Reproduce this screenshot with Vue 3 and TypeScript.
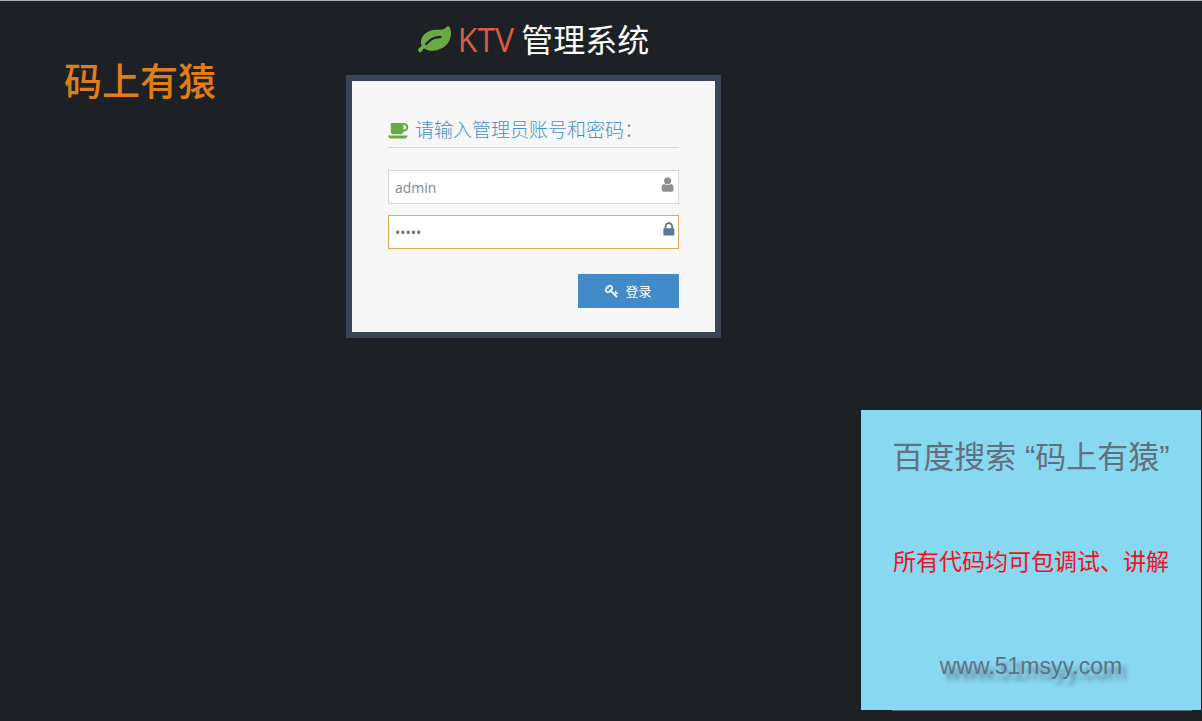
<script setup lang="ts">
import { ref } from 'vue'

const account = ref('admin')
const password = ref('admin')

function login(): void {
  account.value = account.value.trim()
}
</script>

<template>
  <div class="page">
    <div class="brand">码上有猿</div>

    <main class="login">
      <h1 class="title">
        <svg class="leaf" viewBox="0 0 1792 1792" aria-hidden="true">
          <path d="M1280 704q0-26-19-45t-45-19q-172 0-318 49.500t-259.500 134-235.500 219.500q-19 21-19 45 0 26 19 45t45 19q24 0 45-19 27-24 74-71t67-66q137-124 268.500-176t313.500-52q26 0 45-19t19-45zm512-198q0 95-20 193-46 224-184.500 383t-357.500 268q-214 108-438 108-148 0-286-47-15-5-88-42t-96-37q-16 0-39.500 32t-45 70-52.500 70-60 32q-43 0-63.500-17.500t-45.500-59.500q-2-4-6-11t-5.500-10-3-9.500-1.500-13.500q0-35 31-73.500t68-65.500 68-56 31-48q0-4-14-38t-16-44q-9-51-9-104 0-115 43.500-220t119-184.500 170.500-139 204-95.500q55-18 145-25.500t179.500-9 178.500-6 163.500-24 113.500-56.500l29.500-29.500 29.500-28 27-20 36.500-16 43.500-4.500q39 0 70.500 46t47.500 112 24 124 8 96z" />
        </svg>
        <span class="accent">KTV</span>
        <span>管理系统</span>
      </h1>

      <form class="card" @submit.prevent="login">
        <h2 class="prompt">
          <svg class="cup" viewBox="0 0 1920 1792" aria-hidden="true">
            <path d="M1664 640q0-80-56-136t-136-56h-64v384h64q80 0 136-56t56-136zm-1664 768h1792q0 106-75 181t-181 75h-1280q-106 0-181-75t-75-181zm1856-768q0 159-112.500 271.500t-271.500 112.500h-64v32q0 92-66 158t-158 66h-704q-92 0-158-66t-66-158v-736q0-26 19-45t45-19h1152q159 0 271.500 112.500t112.500 271.500z" />
          </svg>
          <span>请输入管理员账号和密码：</span>
        </h2>

        <label class="field">
          <input v-model="account" type="text" name="account" aria-label="账号" autocomplete="off" />
          <svg class="mark" viewBox="0 0 1664 1792" aria-hidden="true">
            <path d="M1536 1399q0 109-62.500 187t-150.500 78h-854q-88 0-150.500-78t-62.500-187q0-85 8.500-160.500t31.500-152 58.500-131 94-89 134.500-34.500q131 128 313 128t313-128q76 0 134.500 34.500t94 89 58.500 131 31.500 152 8.500 160.500zm-256-887q0 159-112.500 271.500t-271.500 112.500-271.500-112.500-112.500-271.500 112.500-271.500 271.500-112.500 271.500 112.500 112.500 271.500z" />
          </svg>
        </label>

        <label class="field active">
          <input v-model="password" type="password" name="password" aria-label="密码" autocomplete="off" />
          <svg class="mark" viewBox="-128 0 1664 1792" aria-hidden="true">
            <path d="M640 768h512v-192q0-106-75-181t-181-75-181 75-75 181v192zm832 96v576q0 40-28 68t-68 28h-960q-40 0-68-28t-28-68v-576q0-40 28-68t68-28h32v-192q0-184 132-316t316-132 316 132 132 316v192h32q40 0 68 28t28 68z" />
          </svg>
        </label>

        <button class="submit" type="submit">
          <svg class="key" viewBox="0 0 1792 1792" aria-hidden="true">
            <path d="M832 512q0-80-56-136t-136-56-136 56-56 136q0 42 19 83-41-19-83-19-80 0-136 56t-56 136 56 136 136 56 136-56 56-136q0-42-19-83 41 19 83 19 80 0 136-56t56-136zm851 704q0 17-49 66t-66 49q-9 0-28.500-16t-36.500-33-38.500-40-24.500-26l-96 96 220 220q28 28 28 68 0 42-39 81t-81 39q-40 0-68-28l-671-671q-176 131-365 131-163 0-265.500-102.500t-102.500-265.500q0-160 95-313t248-248 313-95q163 0 265.500 102.500t102.500 265.500q0 189-131 365l355 355 96-96q-3-3-26-24.500t-40-38.500-33-36.500-16-28.500q0-17 49-66t66-49q13 0 23 10 6 6 46 44.500t82 79.500 86.500 86 73 78 28.500 41z" />
          </svg>
          <span>登录</span>
        </button>
      </form>
    </main>

    <aside class="promo">
      <p class="search">百度搜索 “码上有猿”</p>
      <p class="service">所有代码均可包调试、讲解</p>
      <p class="site">www.51msyy.com</p>
    </aside>
  </div>
</template>

<style>
body {
  margin: 0;
  background: #1d2024;
}
</style>

<style scoped>
.page {
  box-sizing: border-box;
  display: grid;
  grid-template-columns: minmax(0, 346fr) 375px minmax(340px, 480fr);
  min-height: 100vh;
  padding-right: 1px;
  border-top: 1px solid #a9afb3;
  background: #1d2024;
  font-family: "Open Sans", "Noto Sans CJK SC", sans-serif;
}

h1,
h2,
p {
  margin: 0;
}

svg {
  flex: none;
  fill: currentColor;
}

.brand {
  padding: 50px 0 0 64px;
  color: #df7e18;
  font: 500 38px/56px "KaiTi", "STKaiti", "Noto Sans CJK SC", sans-serif;
}

.title {
  display: flex;
  align-items: center;
  justify-content: center;
  gap: 7px;
  height: 74px;
  padding-top: 4px;
  box-sizing: border-box;
  color: #fff;
  font-size: 32px;
  font-weight: 400;
  line-height: 44px;
}

.leaf {
  width: 33px;
  height: 33px;
  color: #69aa46;
}

.accent {
  color: #dd5a43;
}

.card {
  display: flex;
  flex-direction: column;
  padding: 34px 36px 24px;
  border: 6px solid #394557;
  background: #f7f7f7;
}

.prompt {
  display: flex;
  align-items: center;
  gap: 6px;
  margin-bottom: 22px;
  padding-bottom: 2px;
  border-bottom: 1px solid #d5d8da;
  color: #478fca;
  font-size: 19px;
  font-weight: 300;
  line-height: 30px;
}

.cup {
  width: 21px;
  height: 20px;
  color: #69aa46;
}

.field {
  display: flex;
  box-sizing: border-box;
  height: 34px;
  margin-bottom: 11px;
  padding: 0 3px 0 6px;
  border: 1px solid #d5d5d5;
  background: #fff;
  color: #909090;
}

.field.active {
  border-color: #e2a654;
  color: #557799;
}

.field input {
  flex: 1;
  min-width: 0;
  padding: 2px 0 0;
  border: 0;
  outline: 0;
  background: transparent;
  color: #858585;
  font: 14px/20px "Open Sans", "Noto Sans CJK SC", sans-serif;
}

.field.active input {
  color: #696969;
}

.mark {
  width: 16px;
  height: 17px;
  margin-top: 5px;
}

.submit {
  display: flex;
  align-items: center;
  align-self: flex-end;
  justify-content: center;
  gap: 6px;
  width: 101px;
  height: 34px;
  margin-top: 14px;
  padding: 0;
  border: 0;
  background: #428bca;
  color: #fff;
  font: 13px/20px "Open Sans", "Noto Sans CJK SC", sans-serif;
  cursor: pointer;
}

.key {
  width: 14px;
  height: 14px;
}

.promo {
  position: relative;
  display: flex;
  flex-direction: column;
  align-items: center;
  align-self: end;
  justify-self: end;
  justify-content: space-between;
  box-sizing: border-box;
  width: 340px;
  height: 300px;
  margin-bottom: 11px;
  padding: 26px 0 22px;
  background: #87d8f0;
  color: #62717f;
  font-family: "Liberation Sans", "Noto Sans CJK SC", sans-serif;
  line-height: 44px;
  white-space: nowrap;
}

.promo::after {
  content: "";
  position: absolute;
  top: 100%;
  right: 9px;
  left: 31px;
  height: 1px;
  background: #596f88;
}

.search {
  font-size: 31px;
}

.service {
  color: #f50f1c;
  font-size: 23px;
}

.site {
  font-size: 23px;
  text-shadow: 5px 6px 4px rgba(70, 80, 95, 0.6);
}
</style>
